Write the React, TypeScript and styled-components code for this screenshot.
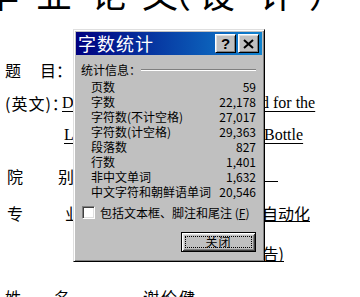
import React from "react";
import styled, { createGlobalStyle } from "styled-components";

const Global = createGlobalStyle`
  html, body { margin: 0; padding: 0; background: #fff; overflow: hidden; }
  body { width: 360px; height: 297px; }
`;

const Page = styled.div`
  position: relative;
  width: 360px;
  height: 297px;
  overflow: hidden;
  background: #fff;
  color: #000;
  font-family: "Liberation Serif", "Noto Sans CJK SC", serif;
  font-size: 16px;
`;

const Heading = styled.div`
  display: flex;
  height: 36px;
  margin: -26px 0 44px -17px;
  font-family: "Noto Sans CJK SC", sans-serif;
  font-size: 36px;
  line-height: 36px;
  white-space: nowrap;
`;

const HeadChar = styled.span<{ $after: number }>`
  margin-right: ${(p) => p.$after}px;
`;

const Row = styled.div<{ $h: number }>`
  display: flex;
  align-items: center;
  height: ${(p) => p.$h}px;
  white-space: nowrap;
`;

const Label = styled.div<{ $w: number }>`
  flex: none;
  display: flex;
  width: ${(p) => p.$w}px;
  font-family: "Noto Sans CJK SC", sans-serif;
  font-size: 16px;
  line-height: 16px;
`;

const Spread = styled.div<{ $ml: number; $w: number }>`
  display: flex;
  justify-content: space-between;
  margin-left: ${(p) => p.$ml}px;
  width: ${(p) => p.$w}px;
`;

const Colon = styled.span`
  width: 6px;
`;

const EnLabel = styled.span`
  padding-left: 5px;
  letter-spacing: 1px;
`;

const Clip = styled.span<{ $w: number }>`
  flex: none;
  width: ${(p) => p.$w}px;
  overflow: hidden;
  text-decoration: underline;
  text-decoration-thickness: 1px;
  text-underline-offset: 3px;
  line-height: 18px;
`;

const Under = styled.span`
  text-decoration: underline;
  text-decoration-thickness: 1px;
  text-underline-offset: 3px;
  line-height: 18px;
`;

const CjkUnder = styled.span<{ $w?: number; $lh?: number; $left?: boolean }>`
  flex: none;
  ${(p) => (p.$w ? `width: ${p.$w}px;` : "")}
  overflow: hidden;
  text-align: ${(p) => (p.$left ? "left" : "right")};
  font-family: "Noto Sans CJK SC", sans-serif;
  font-size: 16px;
  line-height: ${(p) => p.$lh ?? 16}px;
  border-bottom: 1px solid #000;
`;

const Plain = styled.span`
  font-family: "Noto Sans CJK SC", sans-serif;
  font-size: 16px;
  letter-spacing: 2px;
`;

/* ---------- dialog ---------- */

const Dialog = styled.div`
  position: absolute;
  left: 73px;
  top: 29px;
  width: 192px;
  height: 233px;
  box-sizing: border-box;
  display: flex;
  flex-direction: column;
  padding: 2px;
  background: #c0c0c0;
  border: 1px solid;
  border-color: #dfdfdf #000 #000 #dfdfdf;
  box-shadow: inset 1px 1px #fff, inset -1px -1px #808080;
  font-family: "Noto Sans CJK SC", sans-serif;
  font-size: 12px;
  color: #000;
`;

const TitleBar = styled.div`
  flex: none;
  height: 23px;
  display: flex;
  align-items: center;
  padding: 0 3px 0 2px;
  background: linear-gradient(90deg, #000080, #1084d0);
`;

const TitleText = styled.div`
  flex: 1;
  color: #fff;
  font-size: 18px;
  line-height: 23px;
  letter-spacing: 1px;
`;

const CaptionButton = styled.div`
  flex: none;
  width: 21px;
  height: 19px;
  margin-left: 2px;
  box-sizing: border-box;
  display: flex;
  align-items: center;
  justify-content: center;
  background: #c0c0c0;
  border: 1px solid;
  border-color: #fff #000 #000 #fff;
  box-shadow: inset 1px 1px #dfdfdf, inset -1px -1px #808080;
  font-family: "Liberation Sans", sans-serif;
  font-weight: bold;
  font-size: 15px;
  line-height: 15px;
`;

const Body = styled.div`
  flex: 1;
  display: flex;
  flex-direction: column;
  padding: 7px 6px 0 5px;
`;

const GroupHead = styled.div`
  display: flex;
  align-items: center;
  height: 16px;
  line-height: 16px;
`;

const Etch = styled.div`
  flex: 1;
  height: 0;
  border-top: 1px solid #808080;
  border-bottom: 1px solid #fff;
`;

const Stats = styled.div`
  display: flex;
  flex-direction: column;
  margin-top: 1px;
  padding-left: 10px;
`;

const StatRow = styled.div`
  display: flex;
  justify-content: space-between;
  height: 15px;
  line-height: 15px;
  white-space: nowrap;
`;

const CheckRow = styled.div`
  display: flex;
  align-items: center;
  gap: 5px;
  height: 13px;
  margin: 7px 0 0 1px;
  line-height: 13px;
  white-space: nowrap;
`;

const Box = styled.span`
  flex: none;
  width: 13px;
  height: 13px;
  box-sizing: border-box;
  background: #fff;
  border: 1px solid;
  border-color: #808080 #fff #fff #808080;
  box-shadow: inset 1px 1px #404040, inset -1px -1px #dfdfdf;
`;

const Buttons = styled.div`
  display: flex;
  justify-content: flex-end;
  margin-top: 13px;
`;

const PushButton = styled.div`
  width: 75px;
  height: 20px;
  box-sizing: border-box;
  display: flex;
  padding: 3px;
  background: #c0c0c0;
  border: 1px solid #000;
  box-shadow: inset 1px 1px #fff, inset -1px -1px #404040,
    inset 2px 2px #dfdfdf, inset -2px -2px #808080;
`;

const Focus = styled.span`
  flex: 1;
  display: flex;
  align-items: center;
  justify-content: center;
  border: 1px dotted #000;
  font-size: 12px;
  line-height: 12px;
  letter-spacing: 1px;
`;

const stats: [string, string][] = [
  ["页数", "59"],
  ["字数", "22,178"],
  ["字符数(不计空格)", "27,017"],
  ["字符数(计空格)", "29,363"],
  ["段落数", "827"],
  ["行数", "1,401"],
  ["非中文单词", "1,632"],
  ["中文字符和朝鲜语单词", "20,546"],
];

const heading: [string, number][] = [
  ["毕", 17],
  ["业", 19],
  ["论", 15],
  ["文", -23],
  ["（", 8],
  ["设", 24],
  ["计", 14],
  ["）", 0],
];

export default function App() {
  return (
    <Page>
      <Global />
      <Heading>
        {heading.map(([c, a], i) => (
          <HeadChar key={i} $after={a}>
            {c}
          </HeadChar>
        ))}
      </Heading>

      <Row $h={32}>
        <Label $w={62}>
          <Spread $ml={5} $w={51}>
            <span>题</span>
            <span>目</span>
          </Spread>
          <Colon>：</Colon>
        </Label>
      </Row>

      <Row $h={33}>
        <Label $w={62}>
          <EnLabel>(英文)：</EnLabel>
        </Label>
        <Clip $w={199}>Design of the Automatic Detection System Use</Clip>
        <Under>d for the</Under>
      </Row>

      <Row $h={32}>
        <Label $w={64} />
        <Clip $w={200}>Liquid Level Detection of the Glass </Clip>
        <Under>Bottle</Under>
      </Row>

      <Row $h={50}>
        <Label $w={100}>
          <Spread $ml={7} $w={67}>
            <span>院</span>
            <span>别</span>
          </Spread>
        </Label>
        <CjkUnder $w={178} $lh={10} $left>
          电气与信息工程学院
        </CjkUnder>
      </Row>

      <Row $h={24}>
        <Label $w={100}>
          <Spread $ml={7} $w={74}>
            <span>专</span>
            <span>业</span>
          </Spread>
        </Label>
        <CjkUnder $w={162}>电气工程及其</CjkUnder>
        <CjkUnder>自动化</CjkUnder>
      </Row>

      <Row $h={56}>
        <Label $w={97} />
        <CjkUnder>(自动化专业课程设计报告)</CjkUnder>
      </Row>

      <Row $h={32}>
        <Label $w={143}>
          <Spread $ml={5} $w={65}>
            <span>姓</span>
            <span>名</span>
          </Spread>
        </Label>
        <Plain>谢伦健</Plain>
      </Row>

      <Dialog>
        <TitleBar>
          <TitleText>字数统计</TitleText>
          <CaptionButton>?</CaptionButton>
          <CaptionButton>
            <svg width="11" height="10" viewBox="0 0 11 10">
              <path d="M1 1 L10 9 M10 1 L1 9" stroke="#000" strokeWidth="2" fill="none" />
            </svg>
          </CaptionButton>
        </TitleBar>
        <Body>
          <GroupHead>
            <span>统计信息：</span>
            <Etch />
          </GroupHead>
          <Stats>
            {stats.map(([k, v]) => (
              <StatRow key={k}>
                <span>{k}</span>
                <span>{v}</span>
              </StatRow>
            ))}
          </Stats>
          <CheckRow>
            <Box />
            <span>
              包括文本框、脚注和尾注 (<u>F</u>)
            </span>
          </CheckRow>
          <Buttons>
            <PushButton>
              <Focus>关闭</Focus>
            </PushButton>
          </Buttons>
        </Body>
      </Dialog>
    </Page>
  );
}
